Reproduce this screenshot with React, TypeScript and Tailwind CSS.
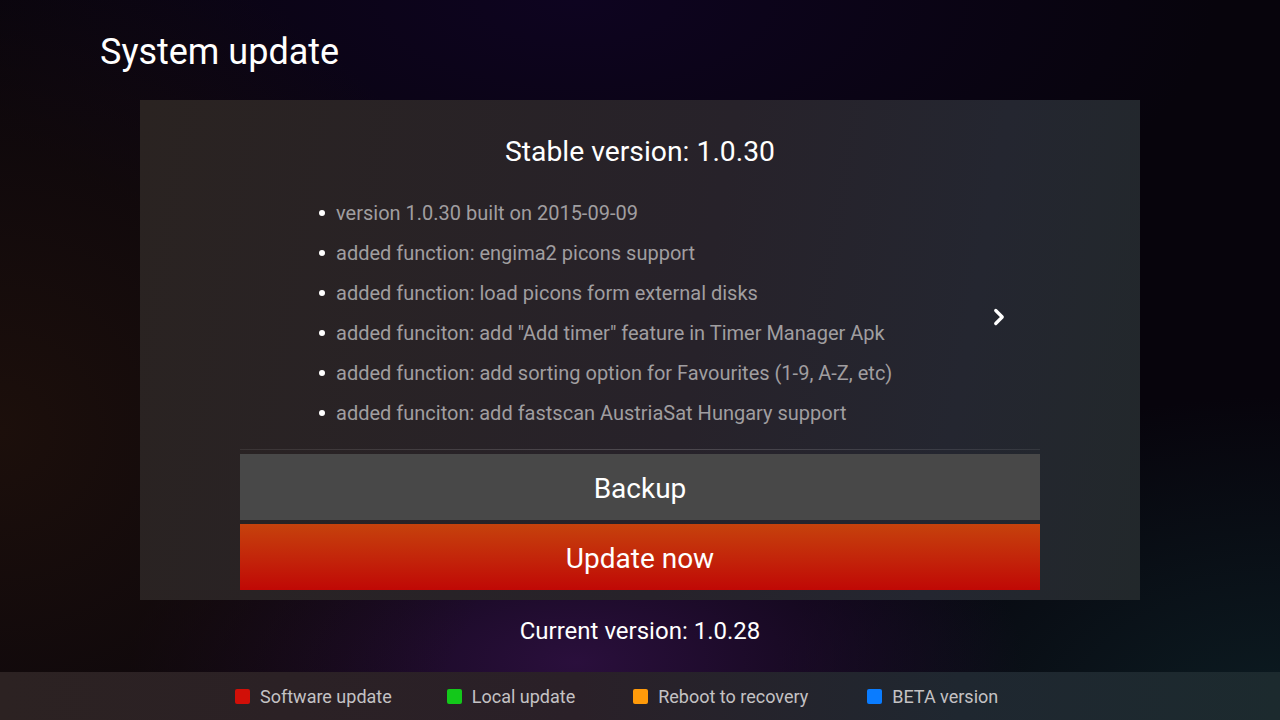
import { ChevronRight } from "lucide-react";

const notes = [
  "version 1.0.30 built on 2015-09-09",
  "added function: engima2 picons support",
  "added function: load picons form external disks",
  'added funciton: add "Add timer" feature in Timer Manager Apk',
  "added function: add sorting option for Favourites (1-9, A-Z, etc)",
  "added funciton: add fastscan AustriaSat Hungary support",
];

const legend = [
  { label: "Software update", color: "bg-[#d10f08]", gap: "mr-[55px]" },
  { label: "Local update", color: "bg-[#13c81a]", gap: "mr-[58px]" },
  { label: "Reboot to recovery", color: "bg-[#ff9a0a]", gap: "mr-[59px]" },
  { label: "BETA version", color: "bg-[#0a7cff]", gap: "" },
];

export default function App() {
  return (
    <div
      className="relative w-[1280px] h-[720px] overflow-hidden flex flex-col bg-[#07040c] bg-[radial-gradient(ellipse_40%_70%_at_0%_60%,#1c0f0b_0%,transparent_100%),radial-gradient(ellipse_35%_30%_at_45%_92%,#2a0f3c_0%,transparent_100%),radial-gradient(ellipse_40%_45%_at_100%_100%,#0c1c22_0%,transparent_100%),radial-gradient(ellipse_50%_40%_at_45%_0%,#0e0420_0%,transparent_100%)]"
      style={{ fontFamily: "Roboto, 'Noto Sans', sans-serif" }}
    >
      {/* Title */}
      <h1 className="pl-[100px] pt-[30px] h-[100px] text-[36px] leading-[44px] text-white">
        System update
      </h1>

      {/* Update panel */}
      <div className="mx-[140px] h-[500px] bg-[linear-gradient(100deg,#2a2321_0%,#27222a_55%,#242630_80%,#22282b_100%)] flex flex-col">
        <h2 className="pt-[34px] text-center text-[28.3px] leading-[36px] text-white">
          Stable version: 1.0.30
        </h2>

        <div className="mt-[23px] flex items-center justify-between pl-[179px] pr-[134px]">
          <ul className="flex flex-col">
            {notes.map((n) => (
              <li
                key={n}
                className="flex items-center h-[40px] text-[20px] text-[#a09ea0]"
              >
                <span className="w-[6px] h-[6px] rounded-full bg-white mr-[11px]" />
                {n}
              </li>
            ))}
          </ul>
          <ChevronRight
            className="w-[26px] h-[26px] text-white mt-[8px] -mr-[6px]"
            strokeWidth={3}
            aria-hidden="true"
          />
        </div>

        <div className="mx-[100px] mt-[16px] h-px bg-[linear-gradient(90deg,rgba(255,255,255,0.08),rgba(255,255,255,0.18),rgba(255,255,255,0.08))]" />

        <div className="mx-[100px] mt-[4px] flex flex-col gap-[4px]">
          <button className="h-[66px] pt-[4px] bg-[#484848] text-white text-[28px]">
            Backup
          </button>
          <button className="h-[66px] pt-[4px] bg-[linear-gradient(180deg,#c6420c_0%,#c3260a_50%,#c00805_100%)] text-white text-[28px]">
            Update now
          </button>
        </div>
      </div>

      {/* Current version */}
      <p className="pt-[15px] h-[72px] text-center text-[24px] leading-[32px] text-white">
        Current version: 1.0.28
      </p>

      {/* Legend bar */}
      <div className="h-[48px] flex items-center pl-[235px] bg-[linear-gradient(90deg,#2c2222_0%,#2a2028_45%,#1f2730_75%,#1c2a2e_100%)]">
        {legend.map((l) => (
          <div key={l.label} className={`flex items-center ${l.gap}`}>
            <span className={`w-[15px] h-[15px] rounded-[2px] ${l.color} mr-[10px]`} />
            <span className="text-[18px] text-[#c4c2c4]">{l.label}</span>
          </div>
        ))}
      </div>
    </div>
  );
}
